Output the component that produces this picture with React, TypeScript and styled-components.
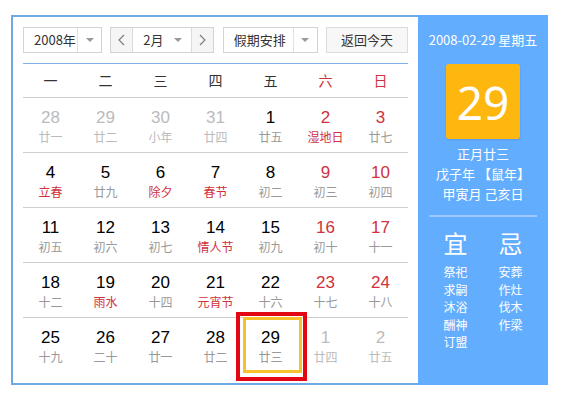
import React from 'react';
import styled, { createGlobalStyle } from 'styled-components';

const CJK = `"Noto Sans CJK SC", "Noto Sans", sans-serif`;
const NUM = `"Liberation Sans", Arial, sans-serif`;
const RED = '#d0313d';

const GlobalStyle = createGlobalStyle`
  html, body { margin: 0; padding: 0; background: #fff; }
  body { font-family: ${CJK}; }
  * { box-sizing: border-box; }
`;

const Wrapper = styled.div`
  display: flex;
  margin: 15px 0 0 11px;
  width: 537px;
`;

const Main = styled.div`
  width: 407px;
  padding: 10px;
  border: 2px solid #6fa8e2;
  border-right: none;
`;

const Toolbar = styled.div`
  display: flex;
  justify-content: space-between;
  height: 26px;
`;

const Select = styled.div<{ $w: number }>`
  display: flex;
  width: ${(p) => p.$w}px;
  height: 26px;
  border: 1px solid #d3d3d3;
  background: #fff;
  color: #333;
  font-size: 13px;
`;

const SelectText = styled.div`
  flex: 1;
  padding-left: 10px;
  line-height: 24px;
`;

const ArrowCell = styled.div`
  width: 24px;
  border-left: 1px solid #e2e2e2;
  display: flex;
  align-items: center;
  justify-content: center;
`;

const Caret = styled.span`
  width: 0;
  height: 0;
  border-left: 4px solid transparent;
  border-right: 4px solid transparent;
  border-top: 4px solid #999;
`;

const NavCell = styled.div<{ $side: 'left' | 'right' }>`
  width: 22px;
  background: #f5f5f5;
  display: flex;
  align-items: center;
  justify-content: center;
  ${(p) => (p.$side === 'left' ? 'border-right: 1px solid #dcdcdc;' : 'border-left: 1px solid #dcdcdc;')}
`;

const MonthMid = styled.div`
  flex: 1;
  display: flex;
  align-items: center;
  justify-content: space-between;
  padding: 0 9px 0 10px;
  line-height: 24px;
`;

const TodayButton = styled.div`
  width: 82px;
  height: 26px;
  border: 1px solid #dcdcdc;
  background: #f7f7f7;
  color: #333;
  font-size: 13px;
  line-height: 24px;
  text-align: center;
`;

const BlueRule = styled.div`
  margin-top: 10px;
  height: 1px;
  background: #7fb2e6;
`;

const WeekHeader = styled.div`
  display: grid;
  grid-template-columns: repeat(7, 55px);
  height: 34px;
  border-bottom: 1px solid #cfcfcf;
`;

const WeekDay = styled.div<{ $weekend?: boolean }>`
  text-align: center;
  font-size: 14px;
  line-height: 33px;
  color: ${(p) => (p.$weekend ? RED : '#333')};
`;

const Row = styled.div<{ $last?: boolean }>`
  display: grid;
  grid-template-columns: repeat(7, 55px);
  height: 55px;
  border-bottom: ${(p) => (p.$last ? 'none' : '1px solid #cfcfcf')};
`;

const Cell = styled.div`
  position: relative;
  display: flex;
  flex-direction: column;
  align-items: center;
  padding-top: 10px;
`;

const DayNum = styled.div<{ $tone: 'normal' | 'weekend' | 'other' }>`
  font-family: ${NUM};
  font-size: 17px;
  line-height: 20px;
  color: ${(p) => (p.$tone === 'other' ? '#bbb' : p.$tone === 'weekend' ? RED : '#000')};
`;

const Lunar = styled.div<{ $tone: 'normal' | 'holiday' | 'other' }>`
  font-size: 12px;
  line-height: 17px;
  color: ${(p) => (p.$tone === 'other' ? '#bbb' : p.$tone === 'holiday' ? RED : '#999')};
`;

const TodayRing = styled.div`
  position: absolute;
  left: 0;
  top: -1px;
  width: 59px;
  height: 56px;
  border: 3px solid #f7c12e;
  pointer-events: none;
`;

const Annotation = styled.div`
  position: absolute;
  left: -7px;
  top: -6px;
  width: 71px;
  height: 69px;
  border: 4px solid #e30613;
  pointer-events: none;
`;

const Panel = styled.div`
  width: 130px;
  background: #63adfe;
  color: #fff;
  display: flex;
  flex-direction: column;
  align-items: center;
  padding-top: 15px;
`;

const DateLine = styled.div`
  font-size: 13px;
  line-height: 20px;
`;

const BigDay = styled.div`
  margin-top: 14px;
  width: 74px;
  height: 75px;
  border-radius: 3px;
  background: #feb70f;
  box-shadow: 0 1px 2px rgba(0, 0, 0, 0.12);
  display: flex;
  align-items: center;
  justify-content: center;
  font-family: "Noto Sans", sans-serif;
  font-size: 46px;
  line-height: 1;
`;

const LunarInfo = styled.div`
  margin-top: 5px;
  display: flex;
  flex-direction: column;
  align-items: center;
`;

const InfoLine = styled.div`
  font-size: 13px;
  line-height: 20px;
  height: 20px;
`;

const PanelRule = styled.div`
  margin-top: 11px;
  width: 108px;
  height: 2px;
  background: #9ccaff;
`;

const Almanac = styled.div`
  display: flex;
  gap: 31px;
  margin-top: 14px;
`;

const AlmanacCol = styled.div`
  display: flex;
  flex-direction: column;
  align-items: center;
`;

const AlmanacHead = styled.div`
  font-size: 24px;
  line-height: 24px;
`;

const AlmanacList = styled.div`
  margin-top: 8px;
  display: flex;
  flex-direction: column;
`;

const AlmanacItem = styled.div`
  font-size: 12px;
  line-height: 17.5px;
  height: 17.5px;
`;

type Day = { d: number; l: string; other?: boolean; holiday?: boolean; today?: boolean };

const rows: Day[][] = [
  [
    { d: 28, l: '廿一', other: true },
    { d: 29, l: '廿二', other: true },
    { d: 30, l: '小年', other: true },
    { d: 31, l: '廿四', other: true },
    { d: 1, l: '廿五' },
    { d: 2, l: '湿地日', holiday: true },
    { d: 3, l: '廿七' },
  ],
  [
    { d: 4, l: '立春', holiday: true },
    { d: 5, l: '廿九' },
    { d: 6, l: '除夕', holiday: true },
    { d: 7, l: '春节', holiday: true },
    { d: 8, l: '初二' },
    { d: 9, l: '初三' },
    { d: 10, l: '初四' },
  ],
  [
    { d: 11, l: '初五' },
    { d: 12, l: '初六' },
    { d: 13, l: '初七' },
    { d: 14, l: '情人节', holiday: true },
    { d: 15, l: '初九' },
    { d: 16, l: '初十' },
    { d: 17, l: '十一' },
  ],
  [
    { d: 18, l: '十二' },
    { d: 19, l: '雨水', holiday: true },
    { d: 20, l: '十四' },
    { d: 21, l: '元宵节', holiday: true },
    { d: 22, l: '十六' },
    { d: 23, l: '十七' },
    { d: 24, l: '十八' },
  ],
  [
    { d: 25, l: '十九' },
    { d: 26, l: '二十' },
    { d: 27, l: '廿一' },
    { d: 28, l: '廿二' },
    { d: 29, l: '廿三', today: true },
    { d: 1, l: '廿四', other: true },
    { d: 2, l: '廿五', other: true },
  ],
];

const weekDays = ['一', '二', '三', '四', '五', '六', '日'];
const yi = ['祭祀', '求嗣', '沐浴', '酬神', '订盟'];
const ji = ['安葬', '作灶', '伐木', '作梁'];
const lunarInfo = ['正月廿三', '戊子年 【鼠年】', '甲寅月 己亥日'];

const Chevron = ({ dir }: { dir: 'left' | 'right' }) => (
  <svg width="7" height="12" viewBox="0 0 7 12">
    <polyline
      points={dir === 'left' ? '6,1 1,6 6,11' : '1,1 6,6 1,11'}
      fill="none"
      stroke="#777"
      strokeWidth="1.1"
    />
  </svg>
);

export default function App() {
  return (
    <>
      <GlobalStyle />
      <Wrapper>
        <Main>
          <Toolbar>
            <Select $w={79}>
              <SelectText>2008年</SelectText>
              <ArrowCell>
                <Caret />
              </ArrowCell>
            </Select>
            <Select $w={104}>
              <NavCell $side="left">
                <Chevron dir="left" />
              </NavCell>
              <MonthMid>
                <span>2月</span>
                <Caret />
              </MonthMid>
              <NavCell $side="right">
                <Chevron dir="right" />
              </NavCell>
            </Select>
            <Select $w={95}>
              <SelectText>假期安排</SelectText>
              <ArrowCell>
                <Caret />
              </ArrowCell>
            </Select>
            <TodayButton>返回今天</TodayButton>
          </Toolbar>
          <BlueRule />
          <WeekHeader>
            {weekDays.map((w, i) => (
              <WeekDay key={w} $weekend={i >= 5}>
                {w}
              </WeekDay>
            ))}
          </WeekHeader>
          {rows.map((row, ri) => (
            <Row key={ri} $last={ri === rows.length - 1}>
              {row.map((day, ci) => (
                <Cell key={ci}>
                  <DayNum $tone={day.other ? 'other' : ci >= 5 ? 'weekend' : 'normal'}>{day.d}</DayNum>
                  <Lunar $tone={day.other ? 'other' : day.holiday ? 'holiday' : 'normal'}>{day.l}</Lunar>
                  {day.today && (
                    <>
                      <TodayRing />
                      <Annotation />
                    </>
                  )}
                </Cell>
              ))}
            </Row>
          ))}
        </Main>
        <Panel>
          <DateLine>2008-02-29 星期五</DateLine>
          <BigDay>29</BigDay>
          <LunarInfo>
            {lunarInfo.map((t) => (
              <InfoLine key={t}>{t}</InfoLine>
            ))}
          </LunarInfo>
          <PanelRule />
          <Almanac>
            <AlmanacCol>
              <AlmanacHead>宜</AlmanacHead>
              <AlmanacList>
                {yi.map((t) => (
                  <AlmanacItem key={t}>{t}</AlmanacItem>
                ))}
              </AlmanacList>
            </AlmanacCol>
            <AlmanacCol>
              <AlmanacHead>忌</AlmanacHead>
              <AlmanacList>
                {ji.map((t) => (
                  <AlmanacItem key={t}>{t}</AlmanacItem>
                ))}
              </AlmanacList>
            </AlmanacCol>
          </Almanac>
        </Panel>
      </Wrapper>
    </>
  );
}
